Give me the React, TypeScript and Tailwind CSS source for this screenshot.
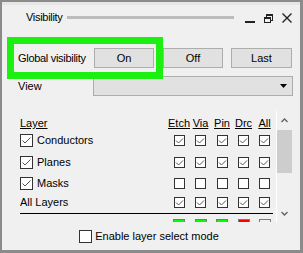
import React from "react";

const font = { fontFamily: '"Liberation Sans", Arial, sans-serif' };

function Check({ size, checked }: { size: number; checked: boolean }) {
  return (
    <div
      className="border border-[#333333] bg-white flex items-center justify-center shrink-0"
      style={{ width: size, height: size }}
    >
      {checked && (
        <svg width={size - 2} height={size - 2} viewBox={`0 0 ${size - 2} ${size - 2}`}>
          {size > 12 ? (
            <polyline points="1.5,5.5 4,8 9.5,2.5" fill="none" stroke="#555555" strokeWidth="1" />
          ) : (
            <polyline points="1,4.5 3.5,7 8,2.5" fill="none" stroke="#555555" strokeWidth="1" />
          )}
        </svg>
      )}
    </div>
  );
}

const colW = ["w-[22px]", "w-[21px]", "w-[22px]", "w-[21px]", "w-[21px]"];

function Cols({ render }: { render: (i: number) => React.ReactNode }) {
  return (
    <>
      {colW.map((w, i) => (
        <div key={i} className={`${w} flex justify-center`}>
          {render(i)}
        </div>
      ))}
    </>
  );
}

function Row({ label, h, checks }: { label: string; h: string; checks: boolean }) {
  return (
    <div className={`flex items-center ${h}`}>
      <div className="flex-1 flex items-center">
        <Check size={13} checked={true} />
        <span className="ml-[4px]">{label}</span>
      </div>
      <Cols render={() => <Check size={11} checked={checks} />} />
    </div>
  );
}

export default function App() {
  const headers = ["Etch", "Via", "Pin", "Drc", "All"];
  const swatch = ["bg-[#00ff00]", "bg-[#00ff00]", "bg-[#00ff00]", "bg-[#ff0000]", "bg-[#f0f0f0]"];
  return (
    <div
      className="relative w-[303px] h-[253px] bg-[#f0f0f0] border-t-2 border-l-2 border-r-[3px] border-b-[3px] border-[#8b8b8b] text-[11px] text-black overflow-hidden"
      style={font}
    >
      {/* title */}
      <div className="flex items-center h-[26px] pt-[1px] pl-[24px] pr-[8px] border-t-[3px] border-[#e6e6e6]">
        <span className="leading-[13px] tracking-[-0.3px]">Visibility</span>
        <div className="flex-1 h-[3px] bg-[#bcbcbc] ml-[4px]" />
        <div className="flex items-center ml-[11px]">
          <svg width="10" height="12" viewBox="0 0 10 12">
            <rect x="0" y="10" width="10" height="2" fill="#222" />
          </svg>
          <svg width="9" height="12" viewBox="0 0 9 12" className="ml-[9px]">
            <rect x="2.5" y="3.5" width="6" height="6" fill="none" stroke="#222" />
            <rect x="2" y="3" width="7" height="2" fill="#222" />
            <rect x="0.5" y="6.5" width="6" height="5" fill="#f0f0f0" stroke="#222" />
            <rect x="0" y="6" width="7" height="2" fill="#222" />
          </svg>
          <svg width="10" height="12" viewBox="0 0 10 12" className="ml-[9px]">
            <path d="M0.5 2.5 L9.5 11.5 M9.5 2.5 L0.5 11.5" stroke="#222" strokeWidth="1.4" />
          </svg>
        </div>
      </div>

      {/* global visibility row */}
      <div className="flex items-center h-[20px] mt-[20px] pl-[16px]">
        <span className="w-[76px] tracking-[-0.3px]">Global visibility</span>
        <button className="w-[60px] h-[20px] bg-[#e1e1e1] border border-[#adadad] text-[11px]">On</button>
        <button className="w-[60px] h-[20px] ml-[9px] bg-[#e1e1e1] border border-[#adadad] text-[11px]">Off</button>
        <button className="w-[61px] h-[20px] ml-[8px] bg-[#e1e1e1] border border-[#adadad] text-[11px]">Last</button>
      </div>

      {/* view row */}
      <div className="flex items-center h-[20px] mt-[8px] pl-[16px]">
        <span className="w-[75px]">View</span>
        <div className="w-[200px] h-[20px] bg-[#e1e1e1] border border-[#adadad] flex items-center justify-end pr-[5px]">
          <svg width="7" height="4" viewBox="0 0 7 4">
            <polygon points="0,0 7,0 3.5,4" fill="#000" />
          </svg>
        </div>
      </div>

      {/* layer table */}
      <div className="flex h-[111px] mt-[15px] pl-[18px] pr-[8px] overflow-hidden">
        <div className="flex-1 flex flex-col pr-[1px] overflow-hidden">
          <div className="flex items-end h-[19px] shrink-0 leading-[13px]">
            <div className="flex-1">
              <span className="underline">Layer</span>
            </div>
            <Cols render={(i) => <span className="underline">{headers[i]}</span>} />
          </div>
          <Row label="Conductors" h="h-[21px] shrink-0" checks={true} />
          <Row label="Planes" h="h-[22px] shrink-0" checks={true} />
          <div className="flex items-center h-[21px] shrink-0">
            <div className="flex-1 flex items-center">
              <Check size={13} checked={true} />
              <span className="ml-[4px]">Masks</span>
            </div>
            <Cols render={() => <Check size={11} checked={false} />} />
          </div>
          <div className="flex items-center h-[16px] shrink-0">
            <div className="flex-1">All Layers</div>
            <Cols render={() => <Check size={11} checked={true} />} />
          </div>
          <div className="h-[1px] bg-black mt-[3px] mr-[2px] shrink-0" />
          <div className="flex mt-[5px] shrink-0">
            <div className="flex-1" />
            <Cols
              render={(i) => (
                <div className={`w-[12px] h-[12px] border border-[#7a7a7a] ${swatch[i]}`} />
              )}
            />
          </div>
        </div>
        <div className="w-[16px] border-l border-white flex flex-col shrink-0">
          <div className="h-[19px] flex items-center justify-center">
            <svg width="7" height="5" viewBox="0 0 7 5">
              <polyline points="0.5,4 3.5,1 6.5,4" fill="none" stroke="#606060" strokeWidth="1.3" />
            </svg>
          </div>
          <div className="h-[43px] bg-[#cdcdcd]" />
          <div className="flex-1" />
          <div className="h-[17px] flex items-center justify-center">
            <svg width="7" height="5" viewBox="0 0 7 5">
              <polyline points="0.5,1 3.5,4 6.5,1" fill="none" stroke="#606060" strokeWidth="1.3" />
            </svg>
          </div>
        </div>
      </div>

      {/* bottom */}
      <div className="flex items-center justify-center mt-[8px] h-[13px] pr-[4px]">
        <Check size={13} checked={false} />
        <span className="ml-[3px] leading-[13px]">Enable layer select mode</span>
      </div>

      {/* highlight overlay */}
      <div className="absolute left-[5px] top-[35px] w-[156px] h-[42px] border-[7px] border-[#1cf011]" />
    </div>
  );
}
